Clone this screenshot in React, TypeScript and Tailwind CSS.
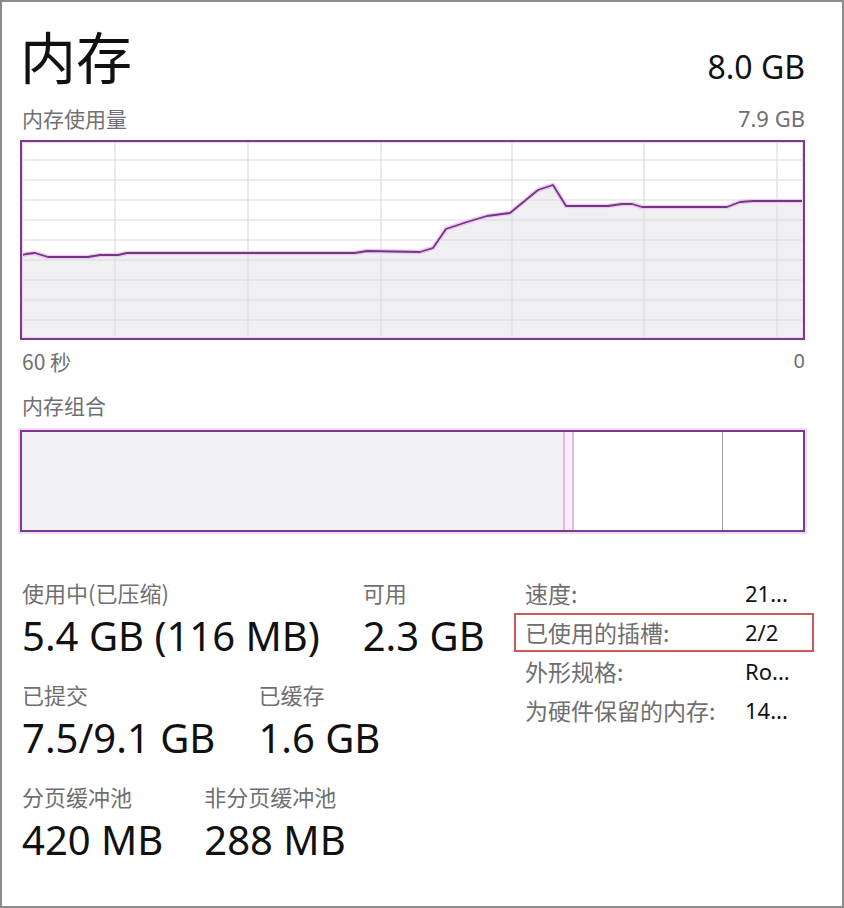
import React from "react";

const CJK = "font-['Noto_Sans_CJK_SC','Noto_Sans',sans-serif]";
const LAT = "font-['Noto_Sans','Noto_Sans_CJK_SC',sans-serif]";

const linePts: [number, number][] = [
  [0, 116], [6, 114], [15, 113], [28, 117], [68, 117], [80, 115], [98, 115], [107, 113],
  [335, 113], [347, 111], [400, 112], [413, 108], [426, 89], [447, 82], [467, 76], [490, 73],
  [518, 50], [533, 45], [546, 66], [588, 66], [602, 64], [612, 64], [622, 67], [707, 67],
  [720, 62], [733, 61], [785, 61],
];

function Chart() {
  const pts = linePts.map(([x, y]) => `${x},${y}`).join(" ");
  const fill = `${pts} 785,200 0,200`;
  const verts = [95, 228, 361, 492, 624, 757];
  const hors = [20, 40, 60, 80, 100, 120, 140, 160, 180];
  return (
    <svg width="785" height="200" viewBox="0 0 785 200" className="block">
      <rect x="0" y="0" width="785" height="200" fill="#ffffff" />
      <polygon points={fill} fill="#f0f0f3" />
      {hors.map((y) => (
        <line key={y} x1="2" x2="783" y1={y} y2={y} stroke="#d9d9dc" strokeWidth="1" />
      ))}
      {verts.map((x) => (
        <line key={x} x1={x} x2={x} y1="2" y2="198" stroke="#e0dae2" strokeWidth="1.2" />
      ))}
      <polyline points={pts} fill="none" stroke="#efc9f3" strokeWidth="4.5" strokeLinejoin="round" />
      <polyline points={pts} fill="none" stroke="#6d3a7f" strokeWidth="1.8" strokeLinejoin="round" />
      <rect x="1" y="1" width="783" height="198" fill="none" stroke="#f2d2f6" strokeWidth="4" />
      <rect x="1" y="1" width="783" height="198" fill="none" stroke="#7a3a8e" strokeWidth="2" />
    </svg>
  );
}

function Stat({ label, value }: { label: string; value: string }) {
  return (
    <div className="flex flex-col shrink-0">
      <div className={`${CJK} text-[22px] leading-[24px] text-[#6f6f6f] whitespace-nowrap`}>{label}</div>
      <div className={`${LAT} text-[40px] leading-[44px] text-[#111] mt-[10px] whitespace-nowrap`}>{value}</div>
    </div>
  );
}

function InfoRow({ label, value, boxed }: { label: string; value: string; boxed?: boolean }) {
  return (
    <div
      className={`flex items-center h-[39px] ${
        boxed ? "border-2 border-[#c95a5a] pl-[9px]" : "pl-[11px]"
      }`}
    >
      <div className={`${CJK} w-[220px] shrink-0 text-[23px] text-[#6f6f6f] whitespace-nowrap`}>{label}</div>
      <div className={`${LAT} text-[22px] text-[#111] whitespace-nowrap`}>{value}</div>
    </div>
  );
}

export default function App() {
  return (
    <div className="w-[844px] h-[908px] border-2 border-[#8c8c8c] bg-white pl-[18px] pr-[37px] pt-[25px] overflow-hidden">
      <div className="flex justify-between items-baseline h-[56px]">
        <div className={`${CJK} text-[56px] leading-none text-[#111]`}>内存</div>
        <div className={`${LAT} text-[32px] leading-none text-[#111]`}>8.0 GB</div>
      </div>
      <div className="flex justify-between items-center h-[24px] mt-[23px]">
        <div className={`${CJK} text-[21px] leading-[24px] text-[#707070] pl-[2px]`}>内存使用量</div>
        <div className={`${LAT} text-[22px] leading-[24px] text-[#707070]`}>7.9 GB</div>
      </div>
      <div className="mt-[10px]">
        <Chart />
      </div>
      <div className="flex justify-between items-center h-[24px] mt-[9px]">
        <div className={`${CJK} text-[21px] leading-[24px] text-[#707070] pl-[2px]`}>60 秒</div>
        <div className={`${LAT} text-[20px] leading-[24px] text-[#707070]`}>0</div>
      </div>
      <div className={`${CJK} text-[21px] leading-[24px] text-[#707070] pl-[2px] mt-[20px]`}>内存组合</div>
      <div className="mt-[13px] h-[102px] border-2 border-[#7a3a8e] shadow-[0_0_0_2px_#f4d8f7] flex">
        <div className="w-[541px] bg-[#f1f1f4]" />
        <div className="w-[11px] bg-[#f7ecf7] border-l-2 border-r-2 border-[#dcbfe0]" />
        <div className="w-[149px] bg-white border-r border-[#9a9a9a]" />
        <div className="flex-1 bg-white" />
      </div>
      <div className="flex mt-[42px]">
        <div className="w-[494px] shrink-0 flex flex-col gap-[24px] pt-[6px] pl-[2px]">
          <div className="flex gap-[43px]">
            <Stat label="使用中(已压缩)" value="5.4 GB (116 MB)" />
            <Stat label="可用" value="2.3 GB" />
          </div>
          <div className="flex gap-[43px]">
            <Stat label="已提交" value="7.5/9.1 GB" />
            <Stat label="已缓存" value="1.6 GB" />
          </div>
          <div className="flex gap-[41px]">
            <Stat label="分页缓冲池" value="420 MB" />
            <Stat label="非分页缓冲池" value="288 MB" />
          </div>
        </div>
        <div className="w-[300px] shrink-0 flex flex-col">
          <InfoRow label="速度:" value="21..." />
          <InfoRow label="已使用的插槽:" value="2/2" boxed />
          <InfoRow label="外形规格:" value="Ro..." />
          <InfoRow label="为硬件保留的内存:" value="14..." />
        </div>
      </div>
    </div>
  );
}
